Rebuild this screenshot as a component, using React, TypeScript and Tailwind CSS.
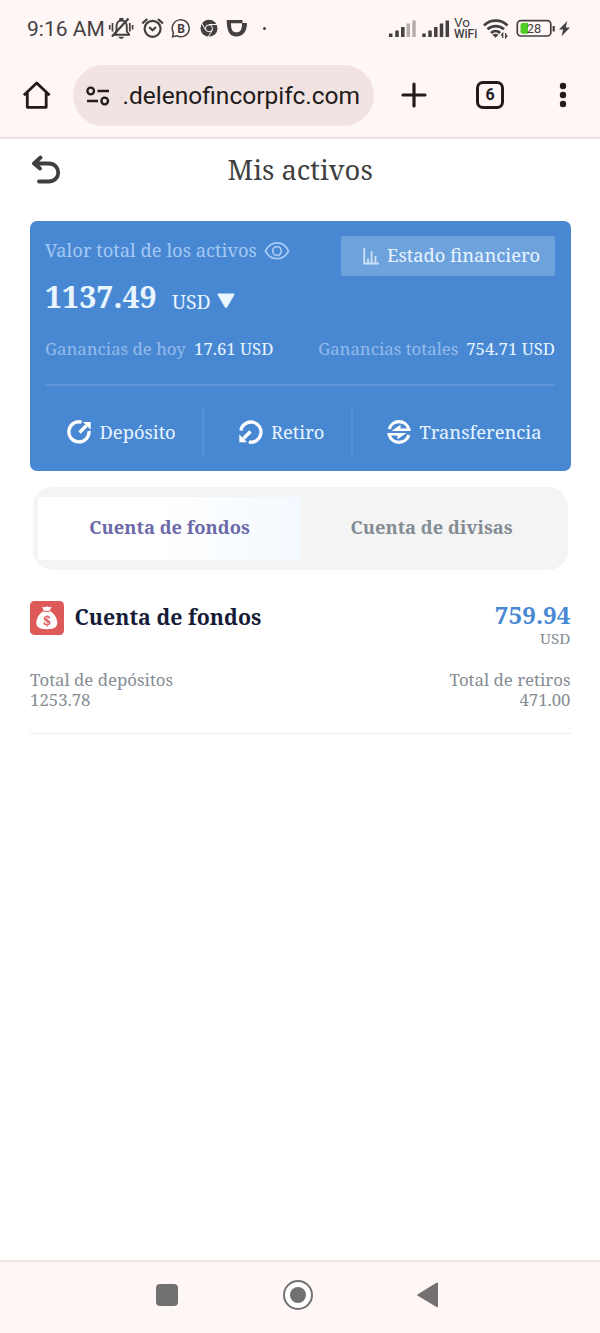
import type { ReactNode } from "react"

function StatusBar() {
  return (
    <div className="flex h-[57px] items-start pl-[27px] pt-4 font-[Roboto,sans-serif] text-[#444042]">
      <div className="w-[81px] whitespace-nowrap pt-px text-[21px] leading-6">9:16 AM</div>

      {/* muted bell */}
      <svg width="27" height="24" viewBox="108 16 27 24" fill="none" stroke="currentColor" strokeWidth="1.9">
        <path d="M114 34.700h16M115.500 33.500l1-2v-5c0-3.500 2-6 5-6s5.300 2.500 5.300 6v5l2.500 3M119.700 19.800c0-1.500 3.300-1.500 3.300 0" />
        <path d="M112 36.500L128.500 18.500" strokeWidth="2.200" />
        <path d="M109.700 25v4.500M112.500 23v8.500M129.800 23v8.500M132.600 25v4.500" strokeWidth="1.700" />
        <path d="M118.500 36.700h5.500c-.8 2.800-4.700 2.800-5.500 0z" fill="currentColor" stroke="none" />
      </svg>

      {/* alarm */}
      <svg className="ml-[6px]" width="24" height="24" viewBox="141 16 24 24" fill="none" stroke="currentColor" strokeWidth="2.200">
        <circle cx="152.600" cy="28.800" r="8" />
        <path d="M142.300 23.300l5-4.300M162.900 23.300l-5-4.300" />
        <path d="M149.200 27l3.300 3.200 3.500-3.200" />
      </svg>

      {/* business chat */}
      <svg className="ml-[6px]" width="20" height="24" viewBox="171 16 20 24" fill="none" stroke="currentColor" strokeWidth="1.500">
        <path d="M172.600 36.700l.8-4.200a8.500 8.500 0 1 1 3.300 3.200z" />
        <text x="177.300" y="32.600" fontSize="12" fontWeight="700" fill="currentColor" stroke="none">B</text>
      </svg>

      {/* chrome */}
      <svg className="ml-[9px]" width="19" height="24" viewBox="200 16 19 24" fill="none">
        <circle cx="209" cy="28.300" r="8.500" fill="currentColor" />
        <circle cx="209" cy="28.300" r="3.500" stroke="#fff8f6" strokeWidth="1" />
        <path d="M209 24.500h8M205.700 30.200l-4-7M212.300 30.200l-4.200 7" stroke="#fff8f6" strokeWidth="1" />
      </svg>

      {/* delivery app */}
      <svg className="ml-[7px]" width="22" height="24" viewBox="226 16 22 24" fill="currentColor">
        <path fillRule="evenodd" d="M226.700 20H242.500V23H247C247 31.500 243 36.500 236.500 36.500 229.500 36.500 226.700 31 226.700 20zM231 23.200C231 29.500 232.500 32.300 236.500 32.300 240.500 32.300 242 29.500 242 23.200z" />
      </svg>

      <div className="ml-[15px] mt-[11px] h-[3px] w-[3px] rounded-full bg-current" />

      {/* signal strength, both sims */}
      <svg className="ml-[122px]" width="62" height="24" viewBox="388 16 62 24" stroke="currentColor" strokeWidth="3.500">
        <path d="M390.700 37v-3.500M397 37v-6.500M402.800 37V27" />
        <path d="M408.300 37V23.500M414 37V20.500" opacity=".4" />
        <path d="M424 37v-3.500M430 37v-6.500M435.800 37V27M441.500 37V23.500M447.300 37V20.500" />
      </svg>

      <div className="ml-[4px] w-[25px] leading-3">
        <div className="text-[13.500px]">Vo</div>
        <div className="text-[12px] font-medium">WiFi</div>
      </div>

      {/* wifi */}
      <svg className="ml-[4px]" width="27" height="24" viewBox="483 16 27 24" fill="none" stroke="currentColor" strokeWidth="2.700">
        <path d="M484 25.500c6.500-6.500 17-6.500 23.500 0M487.500 29.300c4.600-4.300 12-4.300 16.500 0M491 33c2.800-2.500 6.700-2.500 9.200 0" />
        <path d="M492.500 34.800c1.800-1.500 4.300-1.500 6 0l-3 3z" fill="currentColor" stroke="none" />
        <path d="M502.700 38v-4.500l-1.600 2M505.700 33v4.500l1.600-2" strokeWidth="1.300" />
      </svg>

      {/* battery */}
      <svg className="ml-[6px]" width="40" height="24" viewBox="516 16 40 24" fill="none">
        <rect x="517.300" y="20.700" width="33.500" height="15.300" rx="3.500" stroke="currentColor" strokeWidth="1.700" />
        <path d="M522.500 23H528v10.700h-5.500a2 2 0 0 1-2-2V25a2 2 0 0 1 2-2z" fill="#4fcb21" />
        <path d="M553.700 26v5.500" stroke="currentColor" strokeWidth="2.200" />
        <text x="526.700" y="33.200" fontSize="12.800" fill="currentColor">28</text>
      </svg>
      <svg className="ml-[3px]" width="12" height="24" viewBox="559 16 12 24" fill="currentColor">
        <path d="M567.300 21l-8.300 8.500h4.200l-1.700 6.700 8.500-8.700h-4.200z" />
      </svg>
    </div>
  )
}

function BrowserBar() {
  return (
    <div className="flex h-[82px] items-start border-b-2 border-[#f0e0df] pl-[22px] pt-2 font-[Roboto,sans-serif] text-[#211b1b]">
      <svg className="mt-[15px]" width="30" height="30" viewBox="22 80 30 30" fill="none" stroke="currentColor" strokeWidth="2.800" strokeLinejoin="round">
        <path d="M23.800 95.300L36.700 83 49.600 95.300M27.300 93v14.300h18.900V93" />
      </svg>

      <div className="ml-[21px] flex h-[61px] w-[301px] items-center rounded-full bg-[#f1e3e2] pl-[13px]">
        <svg width="24" height="22" viewBox="86 84 24 22" fill="none" stroke="currentColor" strokeWidth="2.300">
          <circle cx="90.700" cy="90" r="3.300" />
          <circle cx="104.700" cy="100" r="3.300" />
          <path d="M97.500 90H109M87 100h11" />
        </svg>
        {/* the start of the host is scrolled out of view */}
        <div className="ml-[11px] flex w-[239px] items-center whitespace-nowrap text-[24.500px] leading-[34px]">
          <svg className="mt-1" width="3" height="12" viewBox="0 0 3 12" fill="none" stroke="currentColor" strokeWidth="1.300">
            <path d="M.8 1q2 5 0 10" />
          </svg>
          <span className="ml-px">.delenofincorpifc.com</span>
        </div>
      </div>

      <svg className="ml-[27px] mt-[17px]" width="26" height="26" viewBox="401 82 26 26" stroke="currentColor" strokeWidth="3.200" strokeLinecap="round">
        <path d="M403 95h22M414 84v22" />
      </svg>
      <div className="ml-[49px] mt-4 flex h-7 w-7 items-center justify-center rounded-[7px] border-3 border-current text-base font-bold">6</div>
      <svg className="ml-[55px] mt-[15px]" width="8" height="30" viewBox="559 80 8 30" fill="currentColor">
        <circle cx="563" cy="86" r="3.200" />
        <circle cx="563" cy="95" r="3.200" />
        <circle cx="563" cy="104" r="3.200" />
      </svg>
    </div>
  )
}

function DepositIcon() {
  return (
    <svg width="24" height="24" viewBox="0 0 24 24" fill="none" stroke="#fff" strokeWidth="3.300">
      <path d="M14.500 2.100A10.100 10.100 0 1 0 22 11" />
      <path d="M12.500 12.500L19.500 5.500" />
      <path d="M16 2H23.700V9.700z" fill="#fff" stroke="none" />
    </svg>
  )
}

function WithdrawIcon() {
  return (
    <svg width="24" height="24" viewBox="0 0 24 24" fill="none" stroke="#fff" strokeWidth="3.300">
      <path d="M1.900 10.500A10.100 10.100 0 1 1 9.800 22" />
      <path d="M11.500 11.500L4.500 18.500" />
      <path d="M.3 14.500V22.200H8z" fill="#fff" stroke="none" />
    </svg>
  )
}

function TransferIcon() {
  return (
    <svg width="24" height="24" viewBox="0 0 24 24" fill="#fff">
      <path d="M2.200 9a10.200 10.200 0 0 1 19.600 0M2.200 15a10.200 10.200 0 0 0 19.600 0" fill="none" stroke="#fff" strokeWidth="3.200" />
      <path d="M23.800 11H4.500L13.500 4.800V8.500H23.300zM.2 13H19.500L10.500 19.200V15.500H.7z" />
    </svg>
  )
}

function Action({ icon, children }: { icon: ReactNode; children: ReactNode }) {
  return (
    <>
      {icon}
      <span className="ml-[8.500px] whitespace-nowrap pb-px">{children}</span>
    </>
  )
}

function BalanceCard() {
  return (
    <section className="ml-[30px] mr-[29px] h-[250px] rounded-[7px] bg-[#4888d3] pl-[15px] pr-4 pt-[15px] text-[#e9f5ff]">
      <div className="flex items-start justify-between">
        <div>
          <div className="flex h-[30px] items-center text-[#a4c9f5]">
            <span className="w-[219px] whitespace-nowrap pb-[2px] text-[18.350px]">Valor total de los activos</span>
            <svg width="26" height="20" viewBox="0 0 26 20" fill="none" stroke="currentColor" strokeWidth="1.800">
              <path d="M1.500 10C6.500-.8 19.500-.8 24.500 10 19.500 20.300 6.500 20.300 1.500 10z" />
              <circle cx="13" cy="10" r="4.300" />
            </svg>
          </div>
          <div className="flex h-[62px] items-center">
            <span className="w-[127px] whitespace-nowrap text-[30.300px] font-bold">1137.49</span>
            <span className="w-[45px] pt-[9px] text-[19.500px]">USD</span>
            <svg className="mt-2" width="18" height="16" viewBox="0 0 18 16" fill="currentColor">
              <path d="M1.500.5h15q1.500 0 .8 1.500L10.300 14q-1.300 1.800-2.600 0L.7 2Q0 .5 1.500.5z" />
            </svg>
          </div>
        </div>
        <button className="flex h-10 w-[214px] items-center rounded-[3px] bg-[#6ea2dd] pl-[22px] text-[18.350px]">
          <svg width="16" height="17" viewBox="0 0 16 17" fill="none" stroke="#c9e0f8" strokeWidth="1.900">
            <path d="M1.200 0v15.500H16M5 15v-4.500M8.600 15V3M12.500 15V8" />
          </svg>
          <span className="ml-2 whitespace-nowrap pb-[3px]">Estado financiero</span>
        </button>
      </div>

      <div className="flex h-[42px] items-center justify-between pb-px text-[16.800px]">
        <div className="flex whitespace-nowrap">
          <span className="w-[149px] text-[#94bbea]">Ganancias de hoy</span>
          <span>17.61 USD</span>
        </div>
        <div className="flex whitespace-nowrap">
          <span className="w-[148px] text-[#94bbea]">Ganancias totales</span>
          <span>754.71 USD</span>
        </div>
      </div>

      <div className="mt-[14px] flex h-[72px] items-end border-t-2 border-[#5f98da] text-[18.350px]">
        <div className="flex h-12 w-[159px] items-center border-r-2 border-[#5792d8] pl-[22px]">
          <Action icon={<DepositIcon />}>Depósito</Action>
        </div>
        <div className="flex h-12 w-[149px] items-center border-r-2 border-[#5792d8] pl-[34.500px]">
          <Action icon={<WithdrawIcon />}>Retiro</Action>
        </div>
        <div className="flex h-12 items-center pl-[34px]">
          <Action icon={<TransferIcon />}>Transferencia</Action>
        </div>
      </div>
    </section>
  )
}

function AccountTabs() {
  return (
    <div className="ml-[33px] mr-8 mt-4 flex h-[83px] rounded-[20px] bg-[#f4f4f4] px-[5px] py-[10px] text-[18.350px] font-bold">
      <button className="w-[263px] whitespace-nowrap bg-linear-to-r from-white from-45% to-[#f3f9ff] pb-[3px] text-[#6b69a8]">
        Cuenta de fondos
      </button>
      <button className="w-[261px] whitespace-nowrap pb-[3px] text-[#848c93]">Cuenta de divisas</button>
    </div>
  )
}

function FundsAccount() {
  return (
    <section className="ml-[30px] mr-[29px] mt-[31px] h-[133px] border-b border-[#ececec]">
      <div className="flex h-[66px]">
        <svg width="34" height="34" viewBox="0 0 34 34">
          <rect width="34" height="34" rx="4.500" fill="#dd5a58" />
          <path d="M12 5.500l2 .8 3-.8 2.700.8 1.800-.8-1.700 4.300q5.700 3.500 7.200 9.500c1.300 6-1.500 9-10.200 9s-11.500-3-10.200-9q1.500-6 7.200-9.500z" fill="#fff" />
          <path d="M13.500 10.300h6.500" stroke="#dd5a58" />
          <text x="16.900" y="25" fontSize="15" fontWeight="700" textAnchor="middle" fill="#dd5a58">$</text>
        </svg>
        <h2 className="ml-[10.500px] whitespace-nowrap text-[21.350px] font-bold leading-[31px] text-[#161c38]">Cuenta de fondos</h2>
        <div className="ml-auto pr-[.5px] text-right">
          <div className="text-[24.300px] font-bold leading-7 text-[#4888d3]">759.94</div>
          <div className="text-[15.300px] leading-[19px] text-[#858d94]">USD</div>
        </div>
      </div>
      <div className="flex justify-between pr-[.5px] pt-[3px] text-[16.800px] leading-[19.500px] text-[#858d94]">
        <div>
          <div>Total de depósitos</div>
          <div>1253.78</div>
        </div>
        <div className="text-right">
          <div>Total de retiros</div>
          <div>471.00</div>
        </div>
      </div>
    </section>
  )
}

function NavigationBar() {
  return (
    <nav className="mt-auto flex h-[73px] items-center border-t-2 border-[#f0e0df] bg-[#fff7f5] pb-[5px] pl-[156px] text-[#737071]">
      <div className="h-[22px] w-[22px] rounded-[4px] bg-current" />
      <div className="ml-[105px] flex h-[30px] w-[30px] items-center justify-center rounded-full border-2 border-current bg-white">
        <div className="h-4 w-4 rounded-full bg-current" />
      </div>
      <svg className="ml-[104px]" width="22" height="26" viewBox="0 0 22 26" fill="currentColor">
        <path d="M.8 12.200L19.500.8Q21 0 21 1.500v22.800q0 1.500-1.500.7L.8 13.700q-1-.8 0-1.500z" />
      </svg>
    </nav>
  )
}

export default function App() {
  return (
    <div className="flex h-[1333px] w-[600px] flex-col overflow-hidden bg-white font-['Noto_Serif','DejaVu_Serif_Condensed','DejaVu_Serif',serif]">
      <div className="bg-[#fff7f5]">
        <StatusBar />
        <BrowserBar />
      </div>
      <header className="flex h-[82px] items-start pl-[31px] pt-[13px]">
        <svg className="mt-[3px]" width="30" height="30" viewBox="0 0 30 30" fill="none" stroke="#3f3f3f" strokeWidth="3.800" strokeLinecap="round" strokeLinejoin="round">
          <path d="M9.500 2.500L3 8.500l6 5M3 8.500h14.500c13 0 13 18 0 18H8" />
        </svg>
        <h1 className="ml-[166.500px] whitespace-nowrap text-[27.400px] leading-9 text-[#3f3f3f]">Mis activos</h1>
      </header>
      <BalanceCard />
      <AccountTabs />
      <FundsAccount />
      <NavigationBar />
    </div>
  )
}
